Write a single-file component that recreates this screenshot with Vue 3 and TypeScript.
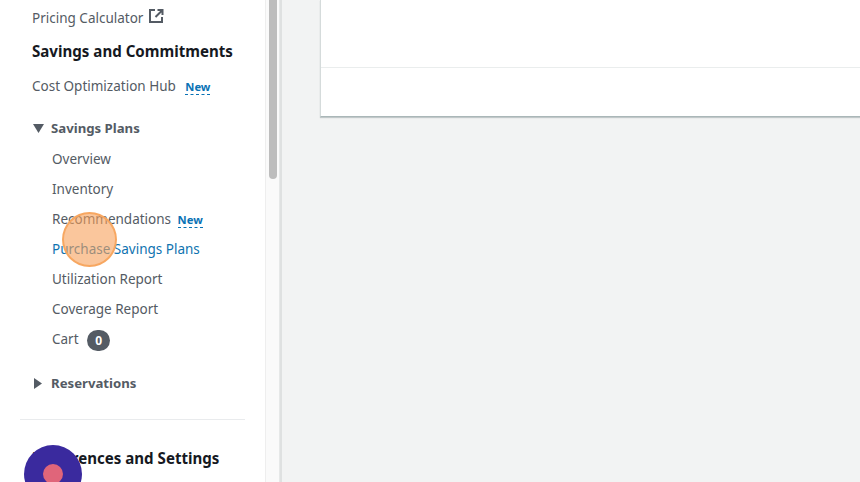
<script setup lang="ts">
const items: { label: string; active?: boolean; isNew?: boolean; count?: number }[] = [
  { label: 'Overview' },
  { label: 'Inventory' },
  { label: 'Recommendations', isNew: true },
  { label: 'Purchase Savings Plans', active: true },
  { label: 'Utilization Report' },
  { label: 'Coverage Report' },
  { label: 'Cart', count: 0 },
]
</script>

<template>
  <div class="page">
    <aside class="nav">
      <div class="link top">
        Pricing Calculator
        <svg class="ext" width="16" height="16" viewBox="0 0 16 16" fill="none" stroke="#545b64" stroke-width="2">
          <path d="M7 2H2v12h12V9" />
          <path d="M9.5 2H14.5V7M14.3 2.2L7.5 9" />
        </svg>
      </div>
      <div class="heading">Savings and Commitments</div>
      <div class="link hub">Cost Optimization Hub <span class="new">New</span></div>
      <div class="group open">
        <svg width="11" height="9" viewBox="0 0 11 9"><path d="M0 0h11L5.5 9z" fill="#545b64" /></svg>
        <span>Savings Plans</span>
      </div>
      <ul class="sub">
        <li v-for="item in items" :key="item.label" :class="{ active: item.active }">
          {{ item.label }}
          <span v-if="item.isNew" class="new">New</span>
          <span v-if="item.count !== undefined" class="count">{{ item.count }}</span>
        </li>
      </ul>
      <div class="group closed">
        <svg width="8" height="11" viewBox="0 0 8 11"><path d="M0 0l8 5.5L0 11z" fill="#545b64" /></svg>
        <span>Reservations</span>
      </div>
      <hr class="rule" />
      <div class="heading prefs">Preferences and Settings</div>
    </aside>
    <div class="scroll"><div class="thumb"></div></div>
    <main class="main">
      <section class="card">
        <div class="card-body"></div>
        <div class="card-foot"></div>
      </section>
    </main>
    <div class="cursor"></div>
    <div class="record"><div class="dot"></div></div>
  </div>
</template>

<style>
html, body { margin: 0; overflow: hidden; }
</style>

<style scoped>
.page {
  position: relative;
  display: flex;
  width: 860px;
  height: 482px;
  overflow: hidden;
  background: #f2f3f3;
  font-family: "Noto Sans", "Open Sans", sans-serif;
  font-size: 13.5px;
  color: #545b64;
}
.nav {
  box-sizing: border-box;
  width: 265px;
  flex: none;
  background: #fff;
  padding: 8px 20px 0 32px;
  overflow: hidden;
}
.link { line-height: 20px; white-space: nowrap; }
.top { display: flex; align-items: center; gap: 5px; }
.ext { margin-top: -4px; }
.heading {
  margin-top: 13px;
  font-size: 15.1px;
  font-weight: 700;
  line-height: 20px;
  color: #16191f;
  white-space: nowrap;
}
.hub { margin-top: 15px; }
.new {
  margin-left: 6px;
  font-size: 11.2px;
  font-weight: 700;
  color: #0972b5;
  border-bottom: 1px dashed #0972b5;
}
.sub .new { margin-left: 3px; }
.group {
  display: flex;
  align-items: center;
  font-size: 13.2px;
  font-weight: 700;
  line-height: 20px;
}
.open { margin-top: 21px; gap: 7px; }
.open svg { margin-left: 1px; }
.closed { margin-top: 14px; gap: 9px; }
.closed svg { margin-left: 2px; }
.sub { list-style: none; margin: 11px 0 0; padding: 0 0 0 20px; }
.sub li {
  height: 30px;
  line-height: 20px;
  white-space: nowrap;
}
.sub li.active { color: #0f73b0; }
.count {
  display: inline-block;
  width: 23px;
  height: 21px;
  margin-left: 5px;
  border-radius: 11px;
  background: #545b64;
  color: #fff;
  font-size: 12px;
  font-weight: 700;
  line-height: 21px;
  text-align: center;
  vertical-align: -1px;
}
.rule {
  width: 225px;
  margin: 26px 0 0 -12px;
  border: 0;
  border-top: 1px solid #e9ebed;
}
.prefs { margin-top: 28px; }
.scroll {
  width: 15px;
  flex: none;
  background: #fafafa;
  box-sizing: border-box;
  border-right: 1px solid #e6e8e8;
  border-left: 1px solid #eeeeee;
}
.thumb {
  width: 8px;
  height: 179px;
  margin-left: 3px;
  border-radius: 0 0 4px 4px;
  background: #bdbdbd;
}
.main {
  flex: 1;
  border-left: 2px solid #dfe1e1;
  padding-left: 38px;
}
.card {
  width: 540px;
  height: 117px;
  box-sizing: border-box;
  background: #fff;
  border-left: 1px solid #d5dbdb;
  border-bottom: 1px solid #aab7b8;
  box-shadow: 0 1px 1px rgba(0, 28, 36, 0.2);
}
.card-body { height: 67px; border-bottom: 1px solid #eaeded; }
.cursor {
  position: absolute;
  left: 62px;
  top: 212px;
  width: 55px;
  height: 55px;
  box-sizing: border-box;
  border-radius: 50%;
  border: 2px solid rgba(247, 165, 95, 0.95);
  background: rgba(247, 160, 90, 0.6);
}
.record {
  position: absolute;
  left: 24px;
  top: 445px;
  width: 58px;
  height: 58px;
  border-radius: 50%;
  background: #3a2a9e;
  display: flex;
  align-items: center;
  justify-content: center;
}
.dot {
  width: 20px;
  height: 20px;
  border-radius: 50%;
  background: #e0657a;
}
</style>
